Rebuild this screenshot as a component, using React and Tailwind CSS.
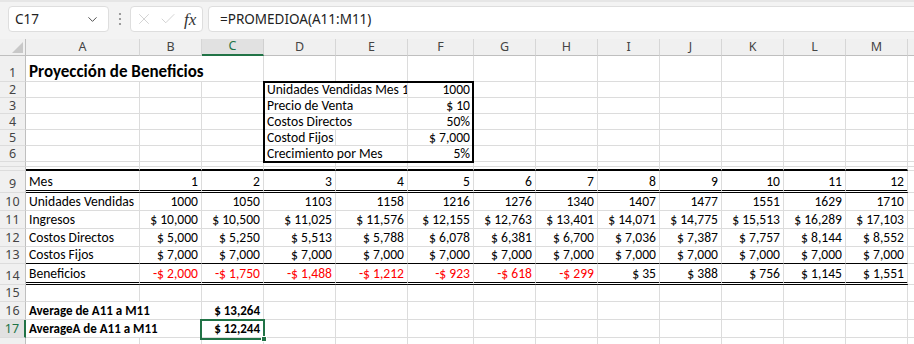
import { ChevronDown, X, Check } from 'lucide-react';

const COLS = [
  ['A', 114], ['B', 62], ['C', 62], ['D', 72], ['E', 72], ['F', 66],
  ['G', 62], ['H', 62], ['I', 62], ['J', 62], ['K', 62], ['L', 62], ['M', 62],
];

const cellFont = 'font-[family-name:Carlito,Lato,sans-serif] text-[13.6px]';
const uiFont = "font-[family-name:'Noto_Sans',sans-serif]";

const series = (label, vals, red = 0) => {
  const cells = { A: { t: label } };
  vals.forEach((v, i) => {
    cells[COLS[i + 1][0]] = { t: v, r: true, cls: i < red ? 'text-[#ff0000]' : '' };
  });
  return cells;
};

const ROWS = [
  { n: '1', h: 26, cells: { A: { t: 'Proyección de Beneficios', span: 3, cls: 'font-bold text-[17px] pb-[1px]' } } },
  { n: '2', h: 16, cells: { D: { t: 'Unidades Vendidas Mes 1', span: 2 }, F: { t: '1000', r: true } } },
  { n: '3', h: 16, cells: { D: { t: 'Precio de Venta', span: 2 }, F: { t: '$ 10', r: true } } },
  { n: '4', h: 16, cells: { D: { t: 'Costos Directos', span: 2 }, F: { t: '50%', r: true } } },
  { n: '5', h: 16, cells: { D: { t: 'Costod Fijos' }, F: { t: '$ 7,000', r: true } } },
  { n: '6', h: 16, cells: { D: { t: 'Crecimiento por Mes', span: 2 }, F: { t: '5%', r: true } } },
  { n: '', h: 5, cells: {} },
  { n: '', h: 4, bottom: 'thick', cells: {} },
  { n: '9', h: 22, bottom: 'double', cells: series('Mes', ['1', '2', '3', '4', '5', '6', '7', '8', '9', '10', '11', '12']) },
  { n: '10', h: 18, cells: series('Unidades Vendidas', ['1000', '1050', '1103', '1158', '1216', '1276', '1340', '1407', '1477', '1551', '1629', '1710']) },
  { n: '11', h: 18, cells: series('Ingresos', ['$ 10,000', '$ 10,500', '$ 11,025', '$ 11,576', '$ 12,155', '$ 12,763', '$ 13,401', '$ 14,071', '$ 14,775', '$ 15,513', '$ 16,289', '$ 17,103']) },
  { n: '12', h: 18, cells: series('Costos Directos', ['$ 5,000', '$ 5,250', '$ 5,513', '$ 5,788', '$ 6,078', '$ 6,381', '$ 6,700', '$ 7,036', '$ 7,387', '$ 7,757', '$ 8,144', '$ 8,552']) },
  { n: '13', h: 17, bottom: 'black', cells: series('Costos Fijos', Array(12).fill('$ 7,000')) },
  { n: '14', h: 21, bottom: 'double', cells: series('Beneficios', ['-$ 2,000', '-$ 1,750', '-$ 1,488', '-$ 1,212', '-$ 923', '-$ 618', '-$ 299', '$ 35', '$ 388', '$ 756', '$ 1,145', '$ 1,551'], 7) },
  { n: '15', h: 17, cells: {} },
  { n: '16', h: 18, cells: { A: { t: 'Average de A11 a M11', span: 2, cls: 'font-bold text-[13px]' }, C: { t: '$ 13,264', r: true, cls: 'font-bold text-[13px]' } } },
  { n: '17', h: 18, sel: true, cells: { A: { t: 'AverageA de A11 a M11', span: 2, cls: 'font-bold text-[13px]' }, C: { t: '$ 12,244', r: true, cls: 'font-bold text-[13px]' } } },
  { n: '', h: 18, cells: {} },
];

function bottomClass(b) {
  if (b === 'double') return 'border-b-[3px] border-double border-b-black';
  if (b === 'black') return 'border-b border-b-black';
  if (b === 'thick') return 'border-b-2 border-b-black';
  return 'border-b border-b-[#dcdcdc]';
}

function SheetRow({ row }) {
  const lead = row.h <= 16 ? 'leading-[15px]' : 'leading-[16px]';
  const out = [];
  for (let i = 0; i < COLS.length; i++) {
    const key = COLS[i][0];
    const c = row.cells[key];
    const span = c?.span || 1;
    let w = 0;
    for (let j = i; j < i + span; j++) w += COLS[j][1];
    out.push(
      <div
        key={key}
        style={{ width: w }}
        className={`shrink-0 h-full overflow-hidden whitespace-nowrap flex items-end border-r border-r-[#dcdcdc] ${bottomClass(row.bottom)} ${c?.r ? 'justify-end pr-[3px]' : 'pl-[3px]'} ${c?.cls || ''}`}
      >
        {c && <span className={lead}>{c.t}</span>}
      </div>
    );
    i += span - 1;
  }
  return (
    <div className="flex" style={{ height: row.h }}>
      <div
        className={`w-[26px] shrink-0 h-full flex items-end justify-center border-b border-b-[#dcdcdc] ${uiFont} text-[12.5px] ${lead} ${
          row.sel ? 'bg-[#e1e1e1] text-[#217346] border-r-2 border-r-[#217346]' : 'bg-[#f0f0f0] text-[#444] border-r border-r-[#bfbfbf]'
        }`}
      >
        {row.n}
      </div>
      {out}
      <div className="flex-1 h-full border-b border-b-[#dcdcdc]" />
    </div>
  );
}

function Toolbar() {
  return (
    <div className={`h-[39px] bg-[#f3f3f3] border-t-2 border-t-[#e6e6e6] flex items-start pt-[4px] pl-[8px] overflow-hidden ${uiFont} text-[13.5px] text-[#222]`}>
      <div className="w-[101px] h-[26px] shrink-0 bg-white border border-[#dedede] rounded-[4px] flex items-center justify-between pl-[6px] pr-[8px]">
        <span>C17</span>
        <ChevronDown size={15} strokeWidth={1.5} className="text-[#444]" />
      </div>
      <div className="w-[21px] h-[26px] shrink-0 flex items-center justify-center">
        <svg width="4" height="14" viewBox="0 0 4 14">
          <circle cx="2" cy="2" r="1.1" fill="#888" />
          <circle cx="2" cy="7" r="1.1" fill="#888" />
          <circle cx="2" cy="12" r="1.1" fill="#888" />
        </svg>
      </div>
      <div className="w-[73px] h-[26px] shrink-0 bg-white border border-[#dedede] rounded-[4px] flex items-center pl-[4px] gap-[6px]">
        <X size={18} strokeWidth={1} className="text-[#c4c4c4]" />
        <Check size={18} strokeWidth={1} className="text-[#c4c4c4]" />
        <span className="font-[family-name:'Liberation_Serif',serif] italic text-[17px] text-[#333] leading-none ml-[1px]">fx</span>
      </div>
      <div className="w-[720px] h-[26px] shrink-0 ml-[5px] bg-white border border-[#dedede] rounded-[4px] flex items-center pl-[11px]">
        =PROMEDIOA(A11:M11)
      </div>
    </div>
  );
}

function ColHeader() {
  return (
    <div className={`flex h-[17px] ${uiFont} text-[12.5px] text-[#444]`}>
      <div className="w-[26px] shrink-0 h-full bg-[#f0f0f0] border-r border-r-[#bfbfbf] border-b border-b-[#bfbfbf] flex items-end justify-end pr-[2px] pb-[2px]">
        <svg width="11" height="11" viewBox="0 0 11 11">
          <polygon points="11,0 11,11 0,11" fill="#c8c8c8" />
        </svg>
      </div>
      {COLS.map(([k, w]) => (
        <div
          key={k}
          style={{ width: w }}
          className={`shrink-0 h-full flex items-center justify-center leading-none ${
            k === 'C'
              ? 'bg-[#e1e1e1] text-[#217346] border-b-2 border-b-[#217346] border-r border-r-[#d0d0d0]'
              : 'bg-[#f0f0f0] border-b border-b-[#bfbfbf] border-r border-r-[#d6d6d6]'
          }`}
        >
          {k}
        </div>
      ))}
      <div className="flex-1 h-full bg-[#f0f0f0] border-b border-b-[#bfbfbf]" />
    </div>
  );
}

export default function App() {
  return (
    <div className="w-[914px] h-[344px] overflow-hidden bg-white">
      <Toolbar />
      <div className={`relative ${cellFont} text-black`}>
        <ColHeader />
        {ROWS.map((r, i) => (
          <SheetRow key={i} row={r} />
        ))}
        {/* input box D2:F6 */}
        <div className="absolute left-[263px] top-[42px] w-[211px] h-[82px] border-2 border-black pointer-events-none" />
        {/* active cell C17 */}
        <div className="absolute left-[200px] top-[280px] w-[65px] h-[21px] border-2 border-[#217346] pointer-events-none">
          <div className="absolute right-[-4px] bottom-[-4px] w-[6px] h-[6px] bg-[#217346] border border-white" />
        </div>
      </div>
    </div>
  );
}
